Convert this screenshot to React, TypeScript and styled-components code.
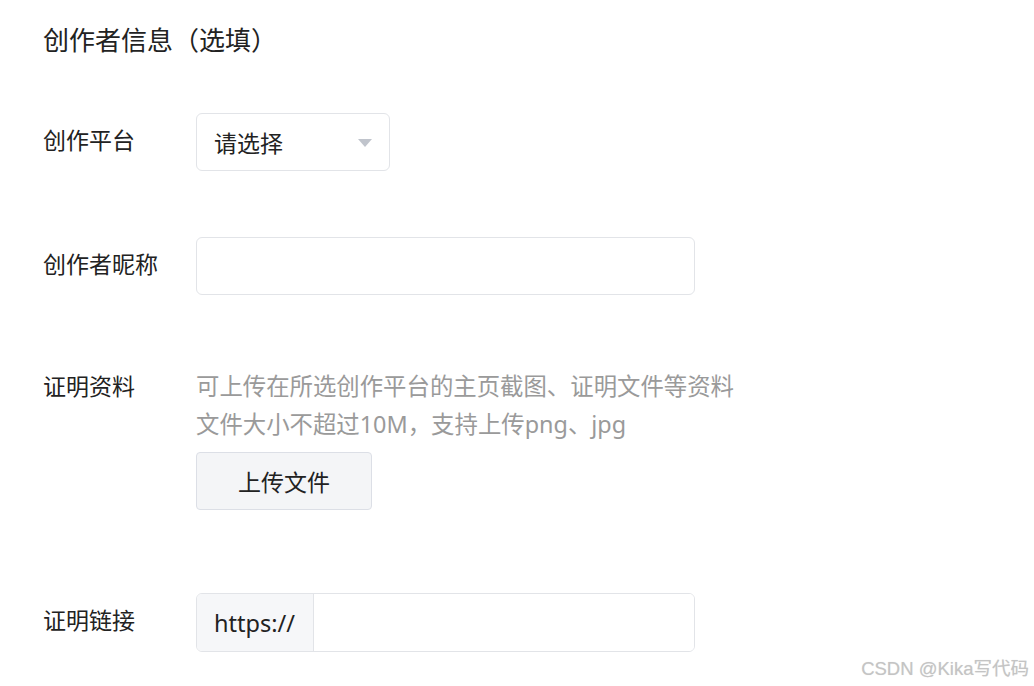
import React from "react";
import styled, { createGlobalStyle } from "styled-components";

const GlobalStyle = createGlobalStyle`
  html, body {
    margin: 0;
    padding: 0;
    background: #ffffff;
  }
  body {
    font-family: "Noto Sans", "Noto Sans CJK SC", sans-serif;
    color: #222222;
  }
`;

const Page = styled.div`
  position: relative;
  width: 1034px;
  height: 686px;
  box-sizing: border-box;
  padding: 22px 0 0 43px;
  overflow: hidden;
`;

const Title = styled.h2`
  margin: 0;
  font-size: 26px;
  font-weight: 400;
  line-height: 36px;
  color: #222222;
`;

const Form = styled.div`
  display: flex;
  flex-direction: column;
`;

const Row = styled.div<{ $mt: number }>`
  display: grid;
  grid-template-columns: 153px auto;
  align-items: start;
  margin-top: ${(p) => p.$mt}px;
`;

const Label = styled.div<{ $pt: number }>`
  font-size: 23px;
  line-height: 38px;
  padding-top: ${(p) => p.$pt}px;
  color: #222222;
  white-space: nowrap;
`;

const Select = styled.div`
  box-sizing: border-box;
  width: 194px;
  height: 58px;
  border: 1px solid #e2e4e8;
  border-radius: 6px;
  display: flex;
  align-items: center;
  justify-content: space-between;
  padding: 0 17px 0 17px;
  font-size: 23px;
  color: #222222;
`;

const Caret = styled.span`
  width: 0;
  height: 0;
  border-left: 7.5px solid transparent;
  border-right: 7.5px solid transparent;
  border-top: 8px solid #c0c4cc;
  margin-top: 2px;
`;

const TextInput = styled.input`
  box-sizing: border-box;
  width: 499px;
  height: 58px;
  border: 1px solid #e2e4e8;
  border-radius: 6px;
  padding: 0 17px;
  font-family: inherit;
  font-size: 23px;
  color: #222222;
  outline: none;
  background: #fff;
`;

const Hint = styled.div`
  font-size: 23.4px;
  line-height: 38px;
  color: #9a9a9a;
  white-space: nowrap;
`;

const UploadButton = styled.button`
  box-sizing: border-box;
  margin-top: 9px;
  width: 176px;
  height: 58px;
  border: 1px solid #dcdfe6;
  border-radius: 4px;
  background: #f4f5f7;
  font-family: inherit;
  font-size: 23px;
  color: #222222;
  cursor: pointer;
  padding: 0;
`;

const UrlGroup = styled.div`
  box-sizing: border-box;
  width: 499px;
  height: 59px;
  border: 1px solid #e2e4e8;
  border-radius: 6px;
  display: flex;
  overflow: hidden;
`;

const Prefix = styled.div`
  width: 117px;
  background: #f6f7f9;
  border-right: 1px solid #e2e4e8;
  display: flex;
  align-items: center;
  padding-left: 17px;
  box-sizing: border-box;
  font-size: 23.5px;
  color: #222222;
`;

const UrlInput = styled.input`
  flex: 1;
  border: none;
  outline: none;
  font-family: inherit;
  font-size: 23px;
  padding: 0 17px;
  background: #fff;
`;

const Watermark = styled.div`
  position: absolute;
  right: 5px;
  bottom: 6px;
  font-family: "Liberation Sans", "Noto Sans CJK SC", sans-serif;
  font-size: 18.5px;
  line-height: 22px;
  color: #c4c4c4;
  text-shadow: 0 0 1px #e0e0e0;
`;

export default function App() {
  return (
    <>
      <GlobalStyle />
      <Page>
        <Title>创作者信息（选填）</Title>
        <Form>
          <Row $mt={55}>
            <Label $pt={8}>创作平台</Label>
            <Select>
              <span>请选择</span>
              <Caret />
            </Select>
          </Row>
          <Row $mt={66}>
            <Label $pt={8}>创作者昵称</Label>
            <TextInput />
          </Row>
          <Row $mt={72}>
            <Label $pt={0}>证明资料</Label>
            <div>
              <Hint>可上传在所选创作平台的主页截图、证明文件等资料</Hint>
              <Hint>文件大小不超过10M，支持上传png、jpg</Hint>
              <UploadButton>上传文件</UploadButton>
            </div>
          </Row>
          <Row $mt={83}>
            <Label $pt={8}>证明链接</Label>
            <UrlGroup>
              <Prefix>https://</Prefix>
              <UrlInput />
            </UrlGroup>
          </Row>
        </Form>
        <Watermark>CSDN @Kika写代码</Watermark>
      </Page>
    </>
  );
}
